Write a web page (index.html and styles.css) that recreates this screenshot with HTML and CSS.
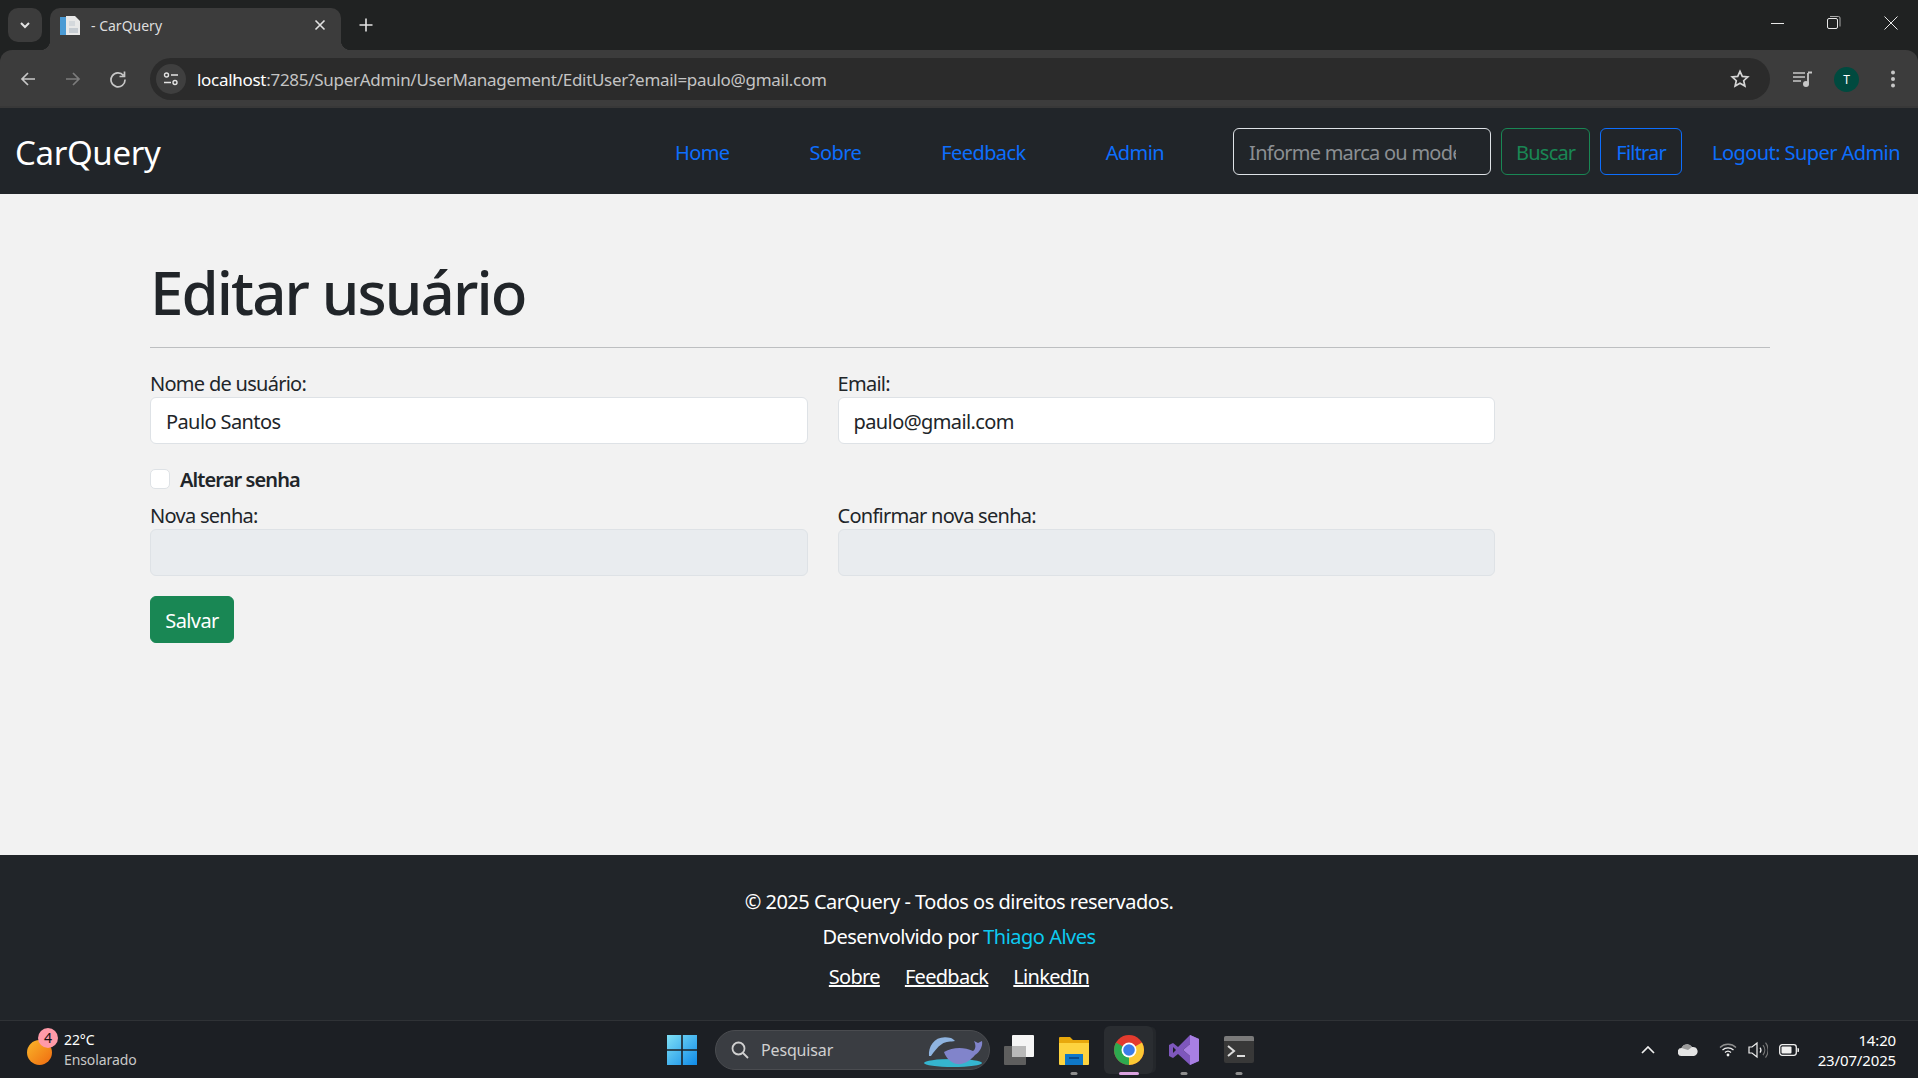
FILE: index.html
```html
<!DOCTYPE html>
<html lang="pt-BR">
<head>
<meta charset="utf-8">
<title>CarQuery</title>
<link rel="stylesheet" href="styles.css">
</head>
<body>
<div class="screen">
  <header class="chrome">
    <div class="tabstrip">
      <button class="tab-menu"><svg width="14" height="14" viewBox="0 0 14 14"><path d="M3 5l4 4 4-4" fill="none" stroke="#e3e3e3" stroke-width="2"/></svg></button>
      <div class="tab">
        <svg class="favicon" width="20" height="20" viewBox="0 0 20 20"><path d="M0 2h6v18H0z" fill="#4a9ad4"/><path d="M6 1h9l5 5v14H6z" fill="#e8e8e8"/><path d="M9 13h9v5H9z" fill="#c6ccd2"/><path d="M9 6h6v5H9z" fill="#d4d8dc"/></svg>
        <span class="tab-title">- CarQuery</span>
        <svg class="tab-close" width="12" height="12" viewBox="0 0 12 12"><path d="M1.500 1.500l9 9M10.500 1.500l-9 9" stroke="#e3e3e3" stroke-width="1.600"/></svg>
      </div>
      <svg class="new-tab" width="14" height="14" viewBox="0 0 14 14"><path d="M7 .5v13M.5 7h13" stroke="#e3e3e3" stroke-width="1.600"/></svg>
      <div class="window-controls">
        <svg width="14" height="14" viewBox="0 0 14 14"><path d="M1 7.500h13" stroke="#e8e8e8" stroke-width="1"/></svg>
        <svg width="14" height="14" viewBox="0 0 14 14"><rect x=".5" y="2.500" width="10" height="10" rx="1.500" fill="none" stroke="#e8e8e8"/><path d="M3 .5h8.500a1.500 1.500 0 0 1 1.500 1.500v8.500" fill="none" stroke="#a8a8a8"/></svg>
        <svg width="14" height="14" viewBox="0 0 14 14"><path d="M.5.5l13 13M13.500.5l-13 13" stroke="#e8e8e8" stroke-width="1"/></svg>
      </div>
    </div>
    <div class="toolbar">
      <div class="nav-icons">
        <svg width="18" height="18" viewBox="0 0 18 18"><path d="M16 9H3M9 3L3 9l6 6" fill="none" stroke="#c7c7c7" stroke-width="1.700"/></svg>
        <svg width="18" height="18" viewBox="0 0 18 18"><path d="M2 9h13M9 3l6 6-6 6" fill="none" stroke="#7c7c7c" stroke-width="1.700"/></svg>
        <svg width="18" height="18" viewBox="0 0 18 18"><path d="M14.500 5.500A7 7 0 1 0 16 9.500M15.500 1.500v5h-5" fill="none" stroke="#c7c7c7" stroke-width="1.700"/></svg>
      </div>
      <div class="omnibox">
        <span class="site-btn"><svg width="16" height="14" viewBox="0 0 16 14"><circle cx="3.500" cy="3" r="2" fill="none" stroke="#e3e3e3" stroke-width="1.400"/><path d="M8 3h7M1 10.500h7" stroke="#e3e3e3" stroke-width="1.500"/><circle cx="12" cy="10.500" r="2" fill="none" stroke="#e3e3e3" stroke-width="1.400"/></svg></span>
        <span class="url">localhost<span class="url-path">:7285/SuperAdmin/UserManagement/EditUser?email=paulo@gmail.com</span></span>
        <svg class="star" width="20" height="20" viewBox="0 0 20 20"><path d="M10 2.300l2.300 5.100 5.500.6-4.100 3.700 1.200 5.400-4.900-2.800-4.900 2.800 1.200-5.400L2.200 8l5.500-.6z" fill="none" stroke="#d5d5d5" stroke-width="1.700"/></svg>
      </div>
      <svg class="media" width="20" height="16" viewBox="0 0 20 16"><path d="M0 2h12M0 6h12M0 10h8" stroke="#c7c7c7" stroke-width="1.600"/><path d="M15 2v10.500" stroke="#c7c7c7" stroke-width="1.800"/><path d="M15 1.500h4" stroke="#c7c7c7" stroke-width="2"/><circle cx="13" cy="13" r="3" fill="#c7c7c7"/></svg>
      <span class="avatar">T</span>
      <svg class="kebab" width="6" height="18" viewBox="0 0 6 18"><circle cx="3" cy="2.500" r="2" fill="#c7c7c7"/><circle cx="3" cy="9" r="2" fill="#c7c7c7"/><circle cx="3" cy="15.500" r="2" fill="#c7c7c7"/></svg>
    </div>
  </header>

  <nav class="navbar">
    <a class="brand" href="#">CarQuery</a>
    <ul class="nav-links">
      <li><a href="#">Home</a></li>
      <li><a href="#">Sobre</a></li>
      <li><a href="#">Feedback</a></li>
      <li><a href="#">Admin</a></li>
    </ul>
    <form class="search">
      <input class="search-input" type="text" placeholder="Informe marca ou modelo">
      <button class="btn-outline btn-green" type="button">Buscar</button>
      <button class="btn-outline btn-blue" type="button">Filtrar</button>
    </form>
    <a class="logout" href="#">Logout: Super Admin</a>
  </nav>

  <main class="main">
    <h1 class="title">Editar usuário</h1>
    <hr class="rule">
    <form class="edit-form">
      <div class="row">
        <div class="field"><label>Nome de usuário:</label><input class="control" type="text" value="Paulo Santos"></div>
        <div class="field"><label>Email:</label><input class="control" type="text" value="paulo@gmail.com"></div>
      </div>
      <label class="check"><span class="check-box"></span><strong>Alterar senha</strong></label>
      <div class="row">
        <div class="field"><label>Nova senha:</label><input class="control" type="password" disabled></div>
        <div class="field"><label>Confirmar nova senha:</label><input class="control" type="password" disabled></div>
      </div>
      <button class="btn-save" type="button">Salvar</button>
    </form>
  </main>

  <footer class="footer">
    <p class="foot-line">© 2025 CarQuery - Todos os direitos reservados.</p>
    <p class="foot-line">Desenvolvido por <a class="author" href="#">Thiago Alves</a></p>
    <p class="foot-links"><a href="#">Sobre</a><a href="#">Feedback</a><a href="#">LinkedIn</a></p>
  </footer>

  <div class="taskbar">
    <div class="weather">
      <span class="sun"><span class="sun-badge">4</span></span>
      <span class="weather-text"><span class="temp">22°C</span><span class="cond">Ensolarado</span></span>
    </div>
    <div class="task-center">
      <svg class="win" width="30" height="30" viewBox="0 0 30 30"><defs><linearGradient id="wg" x1="0" y1="0" x2="1" y2="1"><stop offset="0" stop-color="#7fe0f5"/><stop offset="1" stop-color="#0f8ae8"/></linearGradient></defs><path d="M0 0h14.200v14.200H0zM15.800 0H30v14.200H15.800zM0 15.800h14.200V30H0zM15.800 15.800H30V30H15.800z" fill="url(#wg)"/></svg>
      <div class="task-search">
        <svg width="20" height="20" viewBox="0 0 20 20"><circle cx="8.500" cy="8.500" r="6" fill="none" stroke="#d0d0d0" stroke-width="1.800"/><path d="M13 13l5 5" stroke="#d0d0d0" stroke-width="1.800"/></svg>
        <span>Pesquisar</span>
        <svg class="whales" width="60" height="36" viewBox="0 0 60 36"><ellipse cx="30" cy="31" rx="29" ry="4" fill="#35b5cf"/><path d="M6 24C5 13 13 2 28 6c2 1 3 2 4 3-4 1-9 0-13 3-5 3-8 8-11 12z" fill="#8fb4e0"/><path d="M21 20c9-5 20-5 29-1 3-2 3-6 1-10l4 2 4-2c1 5-2 11-7 14-4 5-11 10-18 9-6-1-11-6-13-12z" fill="#8184cb"/></svg>
      </div>
      <svg class="task-icon" width="30" height="30" viewBox="0 0 30 30"><rect x="0" y="11" width="22" height="19" rx="1" fill="#5e5e5e"/><rect x="8" y="0" width="22" height="22" rx="1" fill="#f5f5f5"/><rect x="8" y="11" width="14" height="11" fill="#b9b9b9"/></svg>
      <span class="task-slot running">
        <svg width="30" height="30" viewBox="0 0 30 30"><path d="M0 3a1 1 0 0 1 1-1h10l3 3h16v24H0z" fill="#e8a80c"/><path d="M0 8h30v21a1 1 0 0 1-1 1H1a1 1 0 0 1-1-1z" fill="#fdd33f"/><path d="M6 19h18v11H6z" fill="#0f78c8"/><path d="M10 23h10" stroke="#0a3f78" stroke-width="1.500"/></svg>
      </span>
      <span class="task-slot active">
        <svg width="30" height="30" viewBox="0 0 30 30"><circle cx="15" cy="15" r="15" fill="#e33b2e"/><path d="M15 15L2.010 7.500A15 15 0 0 0 15 30z" fill="#2da94f"/><path d="M15 15L15 30A15 15 0 0 0 27.990 7.500z" fill="#fcc934"/><circle cx="15" cy="15" r="7.500" fill="#fff"/><circle cx="15" cy="15" r="5.800" fill="#3b7de8"/></svg>
      </span>
      <span class="task-slot running">
        <svg width="30" height="30" viewBox="0 0 30 30"><path d="M21 0l9 4v22l-9 4-12-11-5 4-4-2V10l4-2 5 4z" fill="#7e57bd"/><path d="M21 9v12l-7-6z" fill="#1c1f24"/><path d="M4 12v6l3-3z" fill="#1c1f24"/><path d="M21 0l9 4v22l-9 4zM21 9v12l-7-6z" fill="#a87fe3"/></svg>
      </span>
      <span class="task-slot running">
        <svg width="30" height="30" viewBox="0 0 30 30"><rect y="1" width="30" height="27" rx="2" fill="#383838"/><path d="M0 3a2 2 0 0 1 2-2h26a2 2 0 0 1 2 2v3H0z" fill="#7a7a7a"/><path d="M4 11l6 5-6 5" fill="none" stroke="#ddd" stroke-width="2"/><path d="M13 21h8" stroke="#ddd" stroke-width="2"/></svg>
      </span>
    </div>
    <div class="tray">
      <svg class="tray-chev" width="14" height="8" viewBox="0 0 14 8"><path d="M1 7l6-6 6 6" fill="none" stroke="#f0f0f0" stroke-width="1.700"/></svg>
      <svg class="tray-cloud" width="20" height="13" viewBox="0 0 20 13"><path d="M4 13a4 4 0 0 1-.5-8A6 6 0 0 1 14 4a4.500 4.500 0 0 1 2 9z" fill="#e4e4e4"/><path d="M3.500 5A6 6 0 0 1 14 4l-4 3z" fill="#9a9a9a"/></svg>
      <svg class="tray-wifi" width="18" height="15" viewBox="0 0 18 15"><path d="M1 5.500a11.500 11.500 0 0 1 16 0" fill="none" stroke="#8f8f8f" stroke-width="1.300"/><path d="M3.500 8a8 8 0 0 1 11 0M6 10.500a4.500 4.500 0 0 1 6 0" fill="none" stroke="#f0f0f0" stroke-width="1.300"/><circle cx="9" cy="13" r="1.400" fill="#f0f0f0"/></svg>
      <svg class="tray-vol" width="20" height="18" viewBox="0 0 20 18"><path d="M1 6h3l5-4v14l-5-4H1z" fill="none" stroke="#f0f0f0" stroke-width="1.200"/><path d="M12 6.500a4 4 0 0 1 0 5" fill="none" stroke="#f0f0f0" stroke-width="1.200"/><path d="M15 4a8 8 0 0 1 0 10M17.500 1.500a12 12 0 0 1 0 15" fill="none" stroke="#777" stroke-width="1.200"/></svg>
      <svg class="tray-batt" width="20" height="12" viewBox="0 0 20 12"><rect x=".7" y=".7" width="16.600" height="10.600" rx="2.500" fill="none" stroke="#f0f0f0" stroke-width="1.300"/><rect x="2.500" y="2.500" width="10" height="7" rx="1" fill="#f0f0f0"/><path d="M18.500 4v4a2 2 0 0 0 0-4z" fill="#f0f0f0"/></svg>
      <span class="clock"><span>14:20</span><span>23/07/2025</span></span>
    </div>
  </div>
</div>
</body>
</html>
```

FILE: styles.css
```css
* { box-sizing: border-box; }
html, body { margin: 0; height: 100%; overflow: hidden; }
body { font-family: "Noto Sans", "Open Sans", sans-serif; font-size: 20px; letter-spacing: -.57px; color: #212529; background: #f2f2f2; }
a { text-decoration: none; }
svg { display: block; flex: none; }
.screen { height: 1078px; display: flex; flex-direction: column; }

/* browser chrome */
.chrome { height: 108px; flex: none; background: #202222; }
.tabstrip { height: 50px; display: flex; align-items: flex-start; padding-left: 8px; position: relative; }
.tab-menu { width: 34px; height: 34px; margin-top: 8px; border: 0; padding: 0; border-radius: 10px; background: #3c3c3c; display: flex; align-items: center; justify-content: center; }
.tab { position: relative; width: 291px; height: 42px; margin: 8px 0 0 8px; padding: 0 15px 8px 10px; background: #3c3c3c; border-radius: 10px 10px 0 0; display: flex; align-items: center; }
.tab::before, .tab::after { content: ""; position: absolute; bottom: 0; width: 10px; height: 10px; }
.tab::before { left: -10px; background: radial-gradient(circle at 0 0, transparent 10px, #3c3c3c 10.500px); }
.tab::after { right: -10px; background: radial-gradient(circle at 100% 0, transparent 10px, #3c3c3c 10.500px); }
.tab-title { margin-left: 11px; flex: 1; font-size: 14px; letter-spacing: 0; color: #dedede; }
.new-tab { margin: 18px 0 0 18px; }
.window-controls { margin-left: auto; padding: 16px 20px 0 0; display: flex; gap: 43px; }
.toolbar { height: 58px; background: #3c3c3c; border-radius: 12px 12px 0 0; border-bottom: 2px solid #383838; display: flex; align-items: center; padding: 2px 17px 0 19px; }
.nav-icons { width: 131px; display: flex; gap: 27px; }
.omnibox { width: 1620px; height: 42px; background: #2b2b2b; border-radius: 21px; display: flex; align-items: center; padding: 0 20px 0 6px; }
.site-btn { width: 30px; height: 30px; border-radius: 50%; background: #3f3f3f; display: flex; align-items: center; justify-content: center; }
.url { margin-left: 11px; flex: 1; font-size: 17px; letter-spacing: -.29px; color: #fff; }
.url-path { color: #c4c4c4; }
.media { margin-left: 23px; }
.avatar { width: 25px; height: 25px; margin-left: 21px; border-radius: 50%; background: #004a3f; color: #fff; font-size: 12px; letter-spacing: 0; display: flex; align-items: center; justify-content: center; }
.kebab { margin-left: 31px; }

/* site navbar */
.navbar { height: 86px; flex: none; background: #212529; display: flex; align-items: center; padding: 0 18px 0 15px; }
.brand { color: #fff; font-size: 33px; letter-spacing: -.35px; padding-top: 2px; }
.nav-links { list-style: none; margin: 0 0 0 auto; padding: 0; display: flex; }
.nav-links a { display: block; padding: 2px 40px 0; color: #0d6efd; }
.search { display: flex; gap: 10px; margin-left: 29px; }
.search-input { width: 258px; height: 47px; padding: 2px 34px 0 15px; background: #212529; border: 1px solid #dee2e6; border-radius: 6px; font: inherit; letter-spacing: -.75px; color: #fff; }
.search-input::placeholder { color: #8b8f93; opacity: 1; }
.btn-outline { height: 47px; padding: 2px 15px 0; background: transparent; border-radius: 6px; font: inherit; letter-spacing: -.8px; }
.btn-green { border: 1px solid #198754; color: #198754; padding: 2px 14px 0; }
.btn-blue { border: 1px solid #0d6efd; color: #0d6efd; }
.logout { margin-left: 30px; padding-top: 2px; color: #0d6efd; }

/* main content */
.main { flex: 1; padding: 62px 148px 0 150px; }
.title { margin: 0; font-size: 60px; font-weight: 500; line-height: 72px; letter-spacing: -1.9px; }
.rule { margin: 19px 0 0; border: 0; border-top: 1px solid #bdbfc1; }
.edit-form { width: 1345px; padding-top: 22px; }
.row { display: flex; gap: 30px; }
.field { flex: 1; }
.field label { display: block; height: 27px; line-height: 27px; letter-spacing: -.72px; }
.control { display: block; width: 100%; height: 47px; padding: 2px 15px 0; background: #fff; border: 1px solid #dee2e6; border-radius: 6px; font: inherit; letter-spacing: -.6px; color: #212529; }
.control:disabled { background: #e9ecef; }
.check { display: flex; align-items: center; height: 29px; margin-top: 21px; margin-bottom: 8px; }
.check-box { width: 20px; height: 20px; background: #fff; border: 1px solid #dee2e6; border-radius: 5px; margin: 0 10px 2px 0; }
.check strong { font-weight: 600; letter-spacing: -.9px; }
.btn-save { display: block; height: 47px; width: 84px; margin-top: 20px; padding: 2px 0 0; background: #198754; border: 1px solid #198754; border-radius: 6px; color: #fff; font: inherit; letter-spacing: -.6px; }

/* footer */
.footer { height: 165px; flex: none; background: #212529; color: #fff; text-align: center; padding-top: 33px; letter-spacing: -.5px; }
.foot-line { margin: 0 0 8px; line-height: 27px; }
.foot-links { margin: 13px 0 0; display: flex; justify-content: center; gap: 25px; line-height: 27px; letter-spacing: -.7px; }
.foot-links a { color: #fff; text-decoration: underline; }
.author { color: #0dcaf0; }

/* windows taskbar */
.taskbar { height: 58px; flex: none; background: #1c1f24; border-top: 1px solid #2f3236; display: grid; grid-template-columns: 1fr auto 1fr; align-items: center; color: #fff; letter-spacing: 0; }
.weather { display: flex; align-items: center; padding-left: 27px; }
.sun { position: relative; width: 25px; height: 25px; border-radius: 50%; background: linear-gradient(135deg, #f9b72a, #f06a10); margin-top: 5px; }
.sun-badge { position: absolute; top: -12px; left: 11px; width: 20px; height: 20px; border-radius: 50%; background: #ff9aa8; color: #111; font-size: 14px; display: flex; align-items: center; justify-content: center; }
.weather-text { margin-left: 12px; display: flex; flex-direction: column; font-size: 14px; line-height: 20px; letter-spacing: -.1px; }
.cond { color: #c8c8c8; }
.task-center { display: flex; align-items: center; padding-left: 15px; }
.task-search { width: 275px; height: 40px; margin-left: 18px; border-radius: 20px; background: #3a3d42; border: 1px solid #4a4c50; display: flex; align-items: center; padding: 0 6px 0 14px; color: #d0d0d0; font-size: 16px; letter-spacing: -.15px; }
.task-search span { margin-left: 11px; flex: 1; }
.task-icon { margin: 0 12px 0 14px; }
.task-slot { position: relative; width: 49px; height: 48px; margin: 0 3px; display: flex; align-items: center; justify-content: center; border-radius: 6px; }
.task-slot.running::after, .task-slot.active::after { content: ""; position: absolute; bottom: -1px; left: 50%; transform: translateX(-50%); width: 7px; height: 3px; border-radius: 2px; background: #8e8e8e; }
.task-slot.active { background: #2a2d31; box-shadow: 4px 0 0 -1px #24272b; }
.task-slot.active::after { width: 20px; background: #dba3e0; }
.tray { display: flex; align-items: center; justify-content: flex-end; padding-right: 22px; }
.tray-cloud { margin-left: 23px; }
.tray-wifi { margin-left: 21px; }
.tray-vol { margin-left: 11px; }
.tray-batt { margin-left: 11px; }
.clock { margin-left: 19px; display: flex; flex-direction: column; align-items: flex-end; font-size: 15px; line-height: 20px; letter-spacing: -.15px; }
```
